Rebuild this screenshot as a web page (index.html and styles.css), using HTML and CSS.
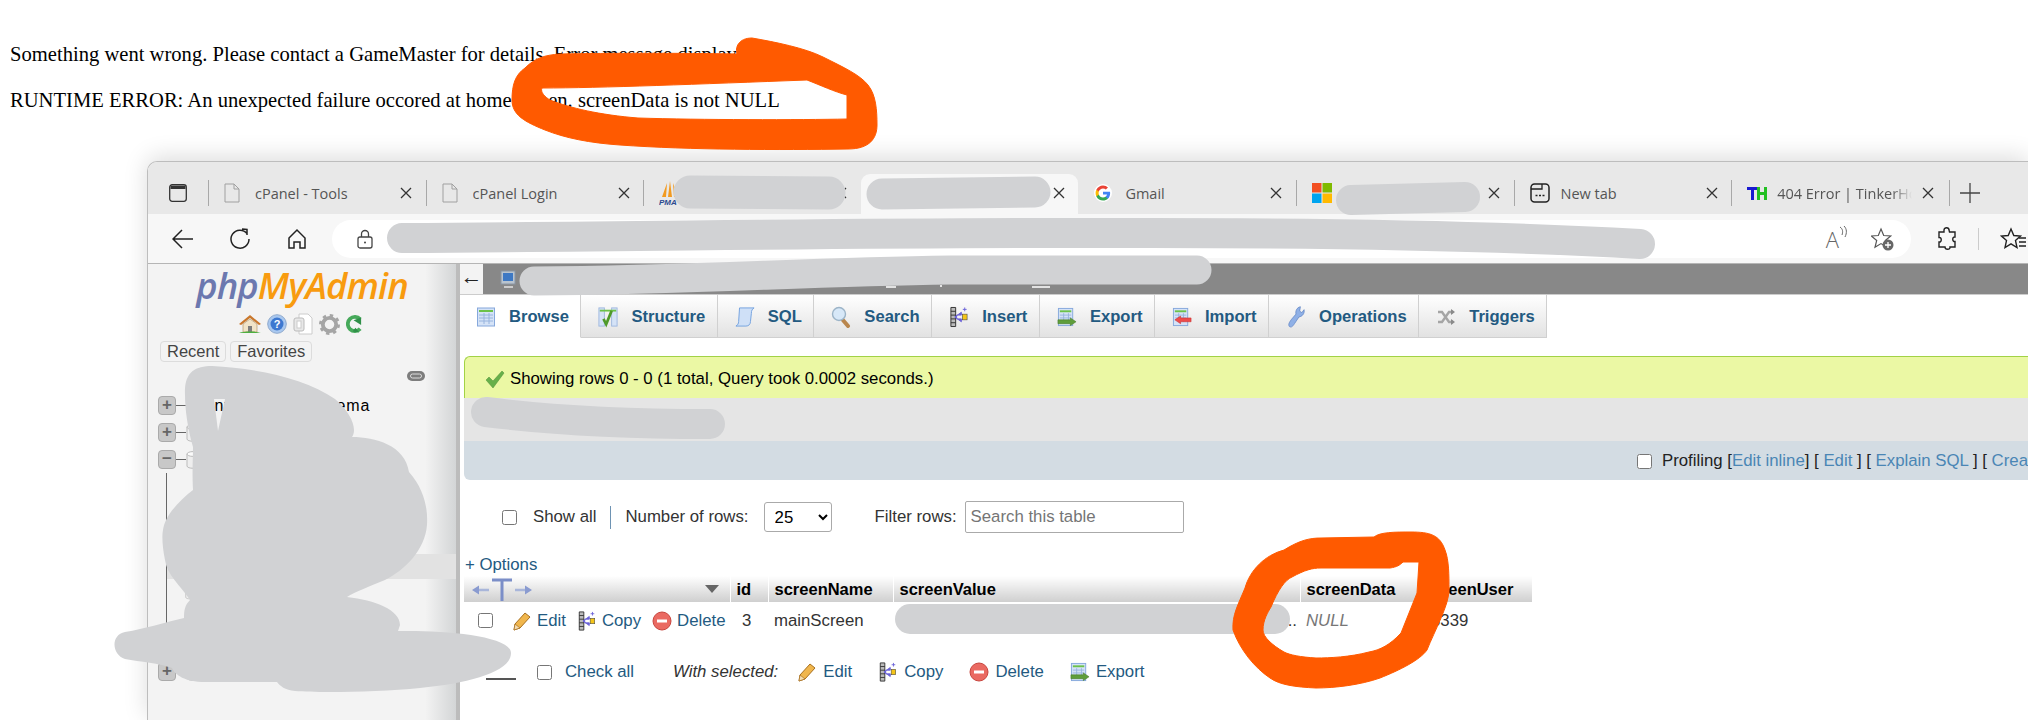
FILE: index.html
```html
<!DOCTYPE html>
<html lang="en">
<head>
<meta charset="utf-8">
<title>Runtime error</title>
<link rel="stylesheet" href="styles.css">
</head>
<body>
<svg class="defs" width="0" height="0" aria-hidden="true">
  <symbol id="i-doc" viewBox="0 0 16 20"><path d="M1 1h9l5 5v13H1z M10 1v5h5" fill="none" stroke="#a0a0a0" stroke-width="1"/></symbol>
  <symbol id="i-x" viewBox="0 0 12 12"><path d="M1 1l10 10M11 1L1 11" stroke="#333" stroke-width="1.3" fill="none"/></symbol>
  <symbol id="i-table" viewBox="0 0 20 20"><rect x="1.5" y="1" width="17" height="18" fill="#d5e3f7" stroke="#86a8dc"/><path d="M3 4h14" stroke="#6cc24a" stroke-width="2"/><path d="M3 8h14M3 11h14M3 14h14M8 6v11M13 6v11" stroke="#98b4de"/></symbol>
  <symbol id="i-struct" viewBox="0 0 22 22"><rect x="1" y="1" width="6" height="20" fill="#d5e3f7" stroke="#9db6de"/><rect x="15" y="1" width="6" height="20" fill="#d5e3f7" stroke="#9db6de"/><path d="M2 4h18" stroke="#6cc24a" stroke-width="2"/><path d="M6 13l3 6 6-15" stroke="#4f9a2a" stroke-width="3" fill="none"/></symbol>
  <symbol id="i-sql" viewBox="0 0 22 22"><path d="M5 1h16c-2 1-3 3-3 6l-1 9c0 3-2 5-5 5H1c2-1 3-3 3-5z" fill="#cfe0f7" stroke="#6d9ede"/></symbol>
  <symbol id="i-search" viewBox="0 0 20 22"><path d="M11 13l6 7" stroke="#b9864d" stroke-width="4" stroke-linecap="round"/><circle cx="8" cy="8" r="6.5" fill="#d7e8f8" stroke="#9cb4c8" stroke-width="1.4"/></symbol>
  <symbol id="i-insert" viewBox="0 0 21 22"><path d="M2 1h5v20H2z" fill="#bbb" stroke="#333"/><path d="M2 5h5M2 9h5M2 13h5M2 17h5" stroke="#333"/><path d="M13 6v3h-5v4h5v3l-7-5z" fill="#6a62d8" stroke="#6a62d8"/><rect x="14" y="8" width="5" height="6" fill="#f5c518" stroke="#444" stroke-width=".6"/><path d="M16.5 1v4M14.5 3h4" stroke="#6a62d8"/></symbol>
  <symbol id="i-export" viewBox="0 0 21 20"><rect x="1.5" y="1" width="15" height="18" fill="#d5e3f7" stroke="#86a8dc"/><path d="M3 4h12" stroke="#6cc24a" stroke-width="2"/><path d="M3 8h12M3 11h12M7 6v9M12 6v9" stroke="#98b4de"/><path d="M1 13h13v-2l6 4-6 4v-2H1z" fill="#5f9e3b" stroke="#4a7d2b" stroke-width=".6"/></symbol>
  <symbol id="i-import" viewBox="0 0 21 20"><rect x="1.5" y="1" width="15" height="18" fill="#d5e3f7" stroke="#86a8dc"/><path d="M3 4h12" stroke="#6cc24a" stroke-width="2"/><path d="M3 8h12M3 11h12M7 6v9M12 6v9" stroke="#98b4de"/><path d="M20 11H9V9l-6 4 6 4v-2h11z" fill="#ee4b4b" stroke="#c83232" stroke-width=".6"/></symbol>
  <symbol id="i-wrench" viewBox="0 0 22 30"><path d="M2 28c-2-3 0-6 3-10l6-7c-1-4 1-9 6-10l-1 6 3 2 3-4c1 5-2 9-7 10l-6 9c-2 3-4 6-7 4z" fill="#8fb0e6" stroke="#5f83c4"/></symbol>
  <symbol id="i-trig" viewBox="0 0 20 20"><path d="M2 5h4l7 10h4M2 15h4l7-10h4" fill="none" stroke="#a5a5a5" stroke-width="2.4"/><path d="M15 2l4 3-4 3zM15 12l4 3-4 3z" fill="#8a8a8a"/></symbol>
  <symbol id="i-pencil" viewBox="0 0 20 20"><path d="M2 19l1-6L13 2l5 4L8 17z" fill="#f0b64d" stroke="#a8701f"/><path d="M2 19l1-6 5 4z" fill="#f4dcb0" stroke="#a8701f" stroke-width=".7"/></symbol>
  <symbol id="i-del" viewBox="0 0 20 20"><circle cx="10" cy="10" r="9" fill="#ea6a62" stroke="#c8453e"/><rect x="5" y="8.500" width="10" height="3" fill="#fff"/></symbol>
  <symbol id="i-check" viewBox="0 0 20 20"><path d="M1 11l3-3 4 4 9-10 2 2-11 15z" fill="#67b04a" stroke="#4d8f36" stroke-width=".5"/></symbol>
  <symbol id="i-db" viewBox="0 0 14 18"><path d="M1 3v12c0 3 12 3 12 0V3z" fill="#eee" stroke="#bbb"/><ellipse cx="7" cy="3" rx="6" ry="2.400" fill="#fafafa" stroke="#bbb"/></symbol>
</svg>

<p class="msg">Something went wrong. Please contact a GameMaster for details. Error message displayed:</p>
<p class="msg">RUNTIME ERROR: An unexpected failure occored at homeScreen. screenData is not NULL</p>

<section class="win">
  <div class="strip">
    <div class="strip-start">
      <svg class="ic-side" viewBox="0 0 18 18" width="18" height="18"><rect x=".7" y=".7" width="16.600" height="16.600" rx="2.500" fill="none" stroke="#333" stroke-width="1.300"/><path d="M1.500 1.500h15V5h-15z" fill="#333"/></svg>
    </div>
    <div class="tab"><i class="sep"></i><svg class="fav fav-doc"><use href="#i-doc"/></svg><span class="lbl">cPanel - Tools</span><svg class="close"><use href="#i-x"/></svg></div>
    <div class="tab"><i class="sep"></i><svg class="fav fav-doc"><use href="#i-doc"/></svg><span class="lbl">cPanel Login</span><svg class="close"><use href="#i-x"/></svg></div>
    <div class="tab"><i class="sep"></i>
      <svg class="fav fav-pma" viewBox="0 0 20 26"><path d="M8 3L3 17h4zM11 1l-2 16h4zM14 3l1 14h4z" fill="#f29a1f"/><text x="0" y="25" font-size="8" font-weight="700" font-style="italic" fill="#2a4a8f" font-family="Liberation Sans">PMA</text></svg>
      <span class="lbl"></span><svg class="close"><use href="#i-x"/></svg></div>
    <div class="tab tab-on"><i class="sep sep-off"></i><i class="fav"></i><span class="lbl"></span><svg class="close"><use href="#i-x"/></svg></div>
    <div class="tab"><i class="sep sep-off"></i>
      <svg class="fav fav-g" viewBox="0 0 48 48"><circle cx="24" cy="24" r="24" fill="#fff"/><path d="M43 24.500c0-1.400-.1-2.700-.4-4H24v7.600h10.700c-.5 2.500-1.900 4.600-4 6v5h6.400C41 35.600 43 30.500 43 24.500z" fill="#4285f4"/><path d="M24 44c5.400 0 9.900-1.800 13.100-4.800l-6.400-5c-1.800 1.200-4 1.900-6.700 1.900-5.200 0-9.600-3.500-11.100-8.200H6.300v5.100C9.600 39.500 16.300 44 24 44z" fill="#34a853"/><path d="M12.900 27.900c-.4-1.200-.6-2.500-.6-3.900s.2-2.700.6-3.900V15H6.300C5 17.700 4.200 20.800 4.200 24s.8 6.300 2.100 9z" fill="#fbbc05"/><path d="M24 11.900c2.900 0 5.600 1 7.600 3l5.700-5.700C33.900 6 29.400 4 24 4 16.300 4 9.600 8.500 6.300 15l6.600 5.100c1.500-4.700 5.900-8.200 11.100-8.200z" fill="#ea4335"/></svg>
      <span class="lbl">Gmail</span><svg class="close"><use href="#i-x"/></svg></div>
    <div class="tab"><i class="sep"></i>
      <svg class="fav fav-ms" viewBox="0 0 20 20"><rect width="9.500" height="9.500" fill="#f25022"/><rect x="10.500" width="9.500" height="9.500" fill="#7fba00"/><rect y="10.500" width="9.500" height="9.500" fill="#00a4ef"/><rect x="10.500" y="10.500" width="9.500" height="9.500" fill="#ffb900"/></svg>
      <span class="lbl"></span><svg class="close"><use href="#i-x"/></svg></div>
    <div class="tab"><i class="sep"></i>
      <svg class="fav fav-new" viewBox="0 0 20 20"><rect x="1" y="1" width="18" height="18" rx="3.500" fill="none" stroke="#222" stroke-width="1.500"/><path d="M1 6h11V1" fill="none" stroke="#222" stroke-width="1.300"/><path d="M5.500 12.500h2M9 12.500h2M12.500 12.500h2" stroke="#222" stroke-width="1.600"/></svg>
      <span class="lbl">New tab</span><svg class="close"><use href="#i-x"/></svg></div>
    <div class="tab"><i class="sep"></i>
      <svg class="fav fav-th" viewBox="0 0 21 13"><path d="M0 0h11v3H7v10H4V3H0z" fill="#1a1ad0"/><path d="M10 0h3v5h4V0h3v13h-3V8h-4v5h-3z" fill="#22c022"/></svg>
      <span class="lbl lbl-fade">404 Error | TinkerHouse</span><svg class="close"><use href="#i-x"/></svg></div>
    <i class="sep sep-last"></i>
    <svg class="plus" viewBox="0 0 22 22" width="22" height="22"><path d="M11 1v20M1 11h20" stroke="#444" stroke-width="1.300"/></svg>
  </div>

  <div class="toolbar">
    <svg class="tool" viewBox="0 0 22 22" width="22" height="22"><path d="M21 11H2M10 2l-9 9 9 9" fill="none" stroke="#222" stroke-width="1.500"/></svg>
    <svg class="tool" viewBox="0 0 22 22" width="22" height="22"><path d="M18 5.500A9 9 0 1 0 20 11M13 1l5 .500v5.500" fill="none" stroke="#222" stroke-width="1.500"/></svg>
    <svg class="tool tool-s" viewBox="0 0 20 22" width="20" height="22"><path d="M2 10l8-8 8 8v10h-5v-6H7v6H2z" fill="none" stroke="#222" stroke-width="1.500"/></svg>
    <div class="pill">
      <svg viewBox="0 0 16 20" width="16" height="20"><path d="M4.500 8V5a3.500 3.500 0 0 1 7 0v3" fill="none" stroke="#444" stroke-width="1.300"/><rect x="1" y="8" width="14" height="11" rx="2" fill="none" stroke="#444" stroke-width="1.300"/><circle cx="8" cy="13.500" r="1" fill="#444"/></svg>
      <span class="pill-gap"></span>
      <span class="read">A<svg viewBox="0 0 8 12" width="8" height="12"><path d="M1 1c3 2 3 5 2 8M5 0c3 3 3 7 1 11" fill="none" stroke="#666"/></svg></span>
      <svg viewBox="0 0 24 24" width="24" height="24"><path d="M10 2l2.700 6.500 7 .5-5.400 4.500 1.700 6.800-6-3.700-6 3.700 1.700-6.800L.3 9l7-.5z" fill="none" stroke="#555" stroke-width="1.200"/><circle cx="17" cy="18" r="5.500" fill="#666"/><path d="M17 15v6M14 18h6" stroke="#fff" stroke-width="1.300"/></svg>
    </div>
    <svg class="puzzle" viewBox="0 0 20 24" width="20" height="24"><path d="M7 3c0-3 5-3 5 0l.5 2H18v5c-3-.5-3 5 0 4.500V20h-5c.5 3-5 3-5 0H2v-5c3 .5 3-5 0-4.500V5h5z" fill="none" stroke="#222" stroke-width="1.400"/></svg>
    <i class="tool-sep"></i>
    <svg class="favs" viewBox="0 0 26 24" width="26" height="24"><path d="M11 2l2.800 6.500 6.700.6-5 4.500 1.500 6.900-6-3.600-6 3.600 1.500-6.900-5-4.500 6.700-.6z" fill="none" stroke="#222" stroke-width="1.400"/><path d="M19 11h7M19 15h7M19 19h7" stroke="#222" stroke-width="1.400"/></svg>
  </div>

  <div class="pma">
    <aside class="side">
      <div class="logo"><span class="logo-a">php</span><span class="logo-b">MyAdmin</span></div>
      <div class="side-icons">
        <svg viewBox="0 0 22 20" width="22" height="20"><path d="M11 1L0 10l2 1 9-7 9 7 2-1z" fill="#c9772c"/><path d="M4 10l7-5 7 5v8H4z" fill="#f1e4c8" stroke="#a88a5a" stroke-width=".6"/><rect x="9" y="12" width="4" height="6" fill="#7d7d7d"/><path d="M0 19c5-2 17-2 22 0z" fill="#4caf3f"/></svg>
        <svg viewBox="0 0 20 20" width="20" height="20"><circle cx="10" cy="10" r="9.300" fill="#a9c8ef" stroke="#8fa9cc"/><circle cx="10" cy="10" r="6.500" fill="#3d78d0"/><text x="10" y="14" font-size="11" font-weight="700" text-anchor="middle" fill="#fff" font-family="Liberation Sans">?</text></svg>
        <svg viewBox="0 0 20 22" width="20" height="22"><path d="M6 1h9l4 4v16H6z" fill="#fff" stroke="#ccc"/><rect x="1" y="5" width="10" height="13" rx="2" fill="#e8e8e8" stroke="#bbb"/><rect x="4" y="8" width="4" height="7" fill="#fff" stroke="#ccc"/></svg>
        <svg viewBox="0 0 22 22" width="21" height="21"><circle cx="11" cy="11" r="7" fill="none" stroke="#a5a5a5" stroke-width="4"/><circle cx="11" cy="11" r="9.500" fill="none" stroke="#a5a5a5" stroke-width="3" stroke-dasharray="3.500 3.960"/></svg>
        <svg viewBox="0 0 18 20" width="17" height="20"><path d="M15 5a7.500 7.500 0 1 0 0 10" fill="none" stroke="#46a95a" stroke-width="4"/><path d="M8 6l8-3v8zM10 14l4 5-7-1z" fill="#2f8f48"/></svg>
      </div>
      <div class="side-btns"><span class="side-btn">Recent</span><span class="side-btn">Favorites</span></div>
      <svg class="chain" viewBox="0 0 18 10" width="18" height="10"><rect width="18" height="10" rx="5" fill="#7d7d7d"/><rect x="3.500" y="3" width="11" height="4" rx="2" fill="none" stroke="#ddd"/></svg>
      <div class="tree">
        <div class="node"><span class="exp">+</span><i class="conn"></i><svg class="db"><use href="#i-db"/></svg><span class="nlabel">information_schema</span></div>
        <div class="node"><span class="exp">+</span><i class="conn"></i><svg class="db"><use href="#i-db"/></svg></div>
        <div class="node"><span class="exp">−</span><i class="conn"></i><svg class="db"><use href="#i-db"/></svg></div>
        <div class="kids"><div class="kid-band"></div><svg class="kid-ic"><use href="#i-db"/></svg></div>
        <div class="node"><span class="exp">+</span><i class="conn"></i><svg class="db"><use href="#i-db"/></svg></div>
      </div>
    </aside>

    <main class="main">
      <div class="crumbs"><span class="crumb-back">←</span>
        <svg viewBox="0 0 18 20" width="18" height="20"><rect x="1" y="2" width="14" height="13" fill="#b9c4cf" stroke="#8a96a3"/><rect x="3" y="4" width="10" height="8" fill="#3e79c4"/><path d="M4 18h9" stroke="#ccc" stroke-width="2"/></svg>
      </div>
      <nav class="ptabs">
        <a class="ptab ptab-on"><svg class="pic"><use href="#i-table"/></svg>Browse</a>
        <a class="ptab"><svg class="pic"><use href="#i-struct"/></svg>Structure</a>
        <a class="ptab"><svg class="pic"><use href="#i-sql"/></svg>SQL</a>
        <a class="ptab"><svg class="pic"><use href="#i-search"/></svg>Search</a>
        <a class="ptab"><svg class="pic"><use href="#i-insert"/></svg>Insert</a>
        <a class="ptab"><svg class="pic"><use href="#i-export"/></svg>Export</a>
        <a class="ptab"><svg class="pic"><use href="#i-import"/></svg>Import</a>
        <a class="ptab"><svg class="pic"><use href="#i-wrench"/></svg>Operations</a>
        <a class="ptab"><svg class="pic"><use href="#i-trig"/></svg>Triggers</a>
      </nav>

      <div class="result">
        <div class="ok"><svg class="ok-ic"><use href="#i-check"/></svg>Showing rows 0 - 0 (1 total, Query took 0.0002 seconds.)</div>
        <div class="sqlbox"></div>
        <div class="sqlacts"><input type="checkbox" class="cb"><span class="prof">Profiling [<a class="lnk">Edit inline</a>] [ <a class="lnk">Edit</a> ] [ <a class="lnk">Explain SQL</a> ] [ <a class="lnk">Create PHP code</a> ]</span></div>
      </div>

      <div class="filters">
        <input type="checkbox" class="cb"><span class="f-show">Show all</span><i class="f-sep"></i><span class="f-num">Number of rows:</span>
        <select class="f-sel"><option>25</option></select>
        <span class="f-filter">Filter rows:</span><input class="f-in" type="text" placeholder="Search this table">
      </div>
      <a class="options">+ Options</a>

      <table class="rows">
        <thead>
          <tr>
            <th class="c-act"><span class="th-act"><svg class="tarrow" viewBox="0 0 62 24" width="62" height="24"><path d="M31 2v21M21 2h20" stroke="#7b8ec8" stroke-width="3"/><path d="M4 12h14M44 12h14" stroke="#a9b6da" stroke-width="2.500"/><path d="M1 12l7-4.500v9zM61 12l-7-4.500v9z" fill="#8a9bd0"/></svg><svg class="tdown" viewBox="0 0 14 10" width="14" height="10"><path d="M0 1h14L7 9z" fill="#666"/></svg></span></th>
            <th class="c-id">id</th><th class="c-name">screenName</th><th class="c-val">screenValue</th><th class="c-data">screenData</th><th class="c-user">screenUser</th>
          </tr>
        </thead>
        <tbody>
          <tr>
            <td class="acts"><span class="acts-in"><input type="checkbox" class="cb cb-row"><a class="act"><svg class="a-ic"><use href="#i-pencil"/></svg>Edit</a><a class="act"><svg class="a-ic"><use href="#i-insert"/></svg>Copy</a><a class="act"><svg class="a-ic"><use href="#i-del"/></svg>Delete</a></span></td>
            <td class="num">3</td><td>mainScreen</td><td class="ell">...</td><td class="null">NULL</td><td class="usr">3339</td>
          </tr>
        </tbody>
      </table>

      <div class="bulk">
        <i class="bulk-arrow"></i><input type="checkbox" class="cb"><a class="bulk-all">Check all</a><em class="bulk-with">With selected:</em>
        <a class="act-b"><svg class="a-ic"><use href="#i-pencil"/></svg>Edit</a>
        <a class="act-b"><svg class="a-ic"><use href="#i-insert"/></svg>Copy</a>
        <a class="act-b"><svg class="a-ic"><use href="#i-del"/></svg>Delete</a>
        <a class="act-b"><svg class="a-ic"><use href="#i-export"/></svg>Export</a>
      </div>
    </main>
  </div>
</section>

<svg class="marks" viewBox="0 0 2028 720" width="2028" height="720" aria-hidden="true">
  <g class="redact">
    <path d="M690 192L829 193" stroke-width="33"/>
    <path d="M882 194L1035 192" stroke-width="31"/>
    <path d="M1351 200L1465 197" stroke-width="30"/>
    <path d="M402 238C700 236 900 232 1150 233C1350 233 1500 236 1640 244" stroke-width="30"/>
    <path d="M534 281C700 280 800 272 950 270L1197 270" stroke-width="29"/>
    <path d="M486 412C550 420 620 424 710 424" stroke-width="30"/>
    <path d="M910 619L1275 619" stroke-width="30"/>
  </g>
  <path class="blob" fill-rule="evenodd" d="M185 395C184 372 195 366 212 366C255 368 305 378 335 399C350 412 358 428 352 437C375 437 405 445 409 472C425 490 428 510 427 525C425 550 405 570 385 580C370 586 355 592 347 597C375 600 400 610 400 625L398 631C440 630 511 635 511 653C511 672 470 683 420 688C380 692 320 693 295 691C285 690 280 686 277 682L205 682C185 682 175 675 172 668C160 663 140 662 125 659C112 655 110 635 125 632C145 629 165 622 184 618C184 610 185 605 190 600C180 585 167 575 165 560C162 545 162 535 163 530C165 515 180 500 193 490C192 470 193 460 193 447C188 430 185 410 185 395ZM214 399L225 399L218 431Z"/>
  <path class="bits" d="M886 287h10M1032 287h18M940 286h2"/>
  <path class="scrawl" fill-rule="evenodd" d="M752 38C775 42 805 48 823 57C845 68 860 75 868 85C876 95 877 110 877 125C877 138 870 149 848 149C780 150 690 150 620 145C590 143 565 138 545 130C525 122 512 115 512 100C512 85 515 75 525 68C535 58 545 55 560 54C610 53 680 53 737 54C735 48 738 38 752 38ZM542 88C600 88 700 84 807 80C820 85 835 92 847 95L847 119C800 120 700 120 638 118C600 115 570 108 550 100C545 97 540 92 542 88Z"/>
  <path class="scrawl" fill-rule="evenodd" d="M1374 537C1380 532 1395 532 1411 532C1430 532 1440 535 1445 550C1449 560 1449 575 1449 590C1449 605 1435 630 1427 650C1420 660 1400 670 1380 678C1360 685 1335 688 1316 688C1295 687 1280 685 1270 678C1255 668 1240 650 1233 630C1232 615 1238 605 1245 588C1250 570 1265 555 1284 550C1300 540 1310 538 1321 538ZM1321 568L1390 568C1397 567 1400 565 1403 562L1419 562L1417 593L1401 633C1390 645 1380 650 1369 652C1350 657 1330 658 1316 658C1300 657 1290 655 1284 652C1272 645 1263 637 1263 630C1263 620 1268 612 1271 607C1278 590 1285 580 1292 577C1305 570 1312 568 1321 568Z"/>
</svg>
</body>
</html>
```
FILE: styles.css
```css
* { box-sizing: border-box; }
html, body { height: 720px; overflow: hidden; }
body { margin: 0; padding-top: 42px; position: relative; background: #fff; color: #000; font-family: "Liberation Sans", Arial, sans-serif; font-size: 16.8px; }
.defs { position: absolute; }
a { color: #235a81; }

.msg { margin: 0 0 22px 10px; font-family: "Liberation Serif", "Times New Roman", serif; font-size: 20.6px; line-height: 24px; white-space: nowrap; }
.msg + .msg { margin-bottom: 0; }

.win { margin: 49px 0 0 147px; height: 559px; border: solid #bdbdbd; border-width: 1px 0 0 1px; border-top-left-radius: 10px; overflow: hidden; box-shadow: 0 -4px 24px rgba(0, 0, 0, .14); background: #f7f7f7; }

.strip { display: flex; align-items: flex-end; height: 52px; background: #e8e8e8; }
.strip-start { width: 60px; height: 40px; padding: 0 0 2px 21px; display: flex; align-items: center; }
.tab { width: 217.6px; flex: none; height: 40px; padding-bottom: 2px; display: flex; align-items: center; font-family: "Open Sans", sans-serif; font-size: 14.5px; color: #555; }
.tab-on { background: #f7f7f7; border-radius: 9px 9px 0 0; }
.sep { display: block; width: 1px; height: 26px; background: #a8a8a8; flex: none; }
.sep-off { background: transparent; }
.sep-last { margin-bottom: 8px; }
.fav { width: 18px; height: 26px; margin-left: 15px; flex: none; }
.fav-doc { width: 16px; height: 20px; margin-right: 2px; }
.fav-g { height: 20px; }
.fav-pma { width: 20px; margin-right: -2px; }
.fav-ms { width: 20px; height: 20px; margin-right: -2px; }
.fav-new { width: 20px; height: 20px; margin-right: -2px; }
.fav-th { width: 21px; height: 13px; margin-right: -3px; }
.lbl { margin-left: 13px; width: 135px; flex: none; white-space: nowrap; overflow: hidden; }
.lbl-fade { -webkit-mask-image: linear-gradient(to right, #000 85%, transparent); mask-image: linear-gradient(to right, #000 85%, transparent); margin-left: 12px; }
.close { width: 12px; height: 12px; margin-left: 10px; flex: none; }
.plus { margin: 0 0 10px 9px; }

.toolbar { display: flex; align-items: center; gap: 35px; height: 50px; padding-left: 24px; border-bottom: 1px solid #b5b5b5; background: #f7f7f7; }
.tool { flex: none; }
.tool-s { margin-left: 1px; }
.pill { display: flex; align-items: center; flex: none; width: 1579px; height: 38px; margin-left: -10px; padding: 0 16px 0 25px; background: #fff; border-radius: 19px; }
.pill-gap { flex: 1; }
.read { display: flex; align-items: flex-start; margin-right: 24px; font-family: "Open Sans", sans-serif; font-size: 22px; font-weight: 300; line-height: 26px; color: #666; }
.puzzle { flex: none; margin-left: -9px; }
.tool-sep { flex: none; width: 1px; height: 22px; background: #ccc; margin-left: -14px; }
.favs { flex: none; margin-left: -14px; }

.pma { display: flex; height: 507px; background: #fff; }
.side { width: 312px; flex: none; border-right: 4px solid #bcbcbc; background: linear-gradient(to right, #f3f3f3 90%, #d3d5d6); }
.logo { height: 38px; padding-top: 2px; text-align: center; font-family: "Open Sans", sans-serif; font-weight: 600; font-style: italic; font-size: 36.5px; line-height: 38px; letter-spacing: -.9px; }
.logo-a { color: #6c78af; }
.logo-b { color: #f89b0f; }
.side-icons { display: flex; justify-content: center; align-items: center; gap: 6px; height: 24px; margin-top: 10px; padding-right: 2px; }
.side-btns { display: flex; gap: 4px; margin: 5px 0 0 12px; }
.side-btn { height: 21px; padding: 0 6px; border: 1px solid #dcdcdc; border-radius: 4px; line-height: 19px; font-size: 16.5px; color: #444; }
.chain { display: block; margin: 9px 0 0 259px; }
.tree { margin-top: 11px; padding-left: 10px; font-size: 16px; }
.node { display: flex; align-items: center; height: 27px; }
.exp { width: 18px; height: 19px; flex: none; border: 1px solid #aaa; border-radius: 4px; background: #c8c8c8; color: #666; font-weight: 700; font-size: 17px; line-height: 16px; text-align: center; }
.conn { width: 10px; height: 1px; flex: none; background: #666; }
.db { width: 14px; height: 18px; flex: none; }
.nlabel { margin-left: 10px; letter-spacing: .9px; white-space: nowrap; }
.kids { height: 185px; margin-left: 8px; padding-top: 81px; border-left: 1px solid #666; }
.kid-band { height: 25px; background: #e2e2e2; }
.kid-ic { display: block; width: 10px; height: 18px; margin: 5px 0 0 18px; }

.main { flex: 1; min-width: 0; }
.crumbs { display: flex; align-items: center; height: 31px; background: #888; border-bottom: 1px solid #ccc; }
.crumb-back { width: 23px; height: 30px; margin-right: 17px; background: #f3f3f3; text-align: center; line-height: 26px; font-size: 22px; color: #222; }
.ptabs { display: flex; height: 43px; }
.ptab { display: flex; align-items: center; height: 43px; padding: 1px 11.5px 0 17px; border: solid #d0d0d0; border-width: 0 1px 1px 0; background: linear-gradient(#fff, #e2e2e2); font-weight: 700; font-size: 16.6px; white-space: nowrap; }
.ptab-on { background: #fff; border-bottom-color: #fff; padding-left: 16px; }
.pic { width: 20px; height: 22px; margin-right: 13px; flex: none; }

.result { margin: 18px 0 0 4px; white-space: nowrap; }
.ok { display: flex; align-items: center; height: 42px; padding: 2px 0 0 20px; background: #ebf8a4; border-top: 1px solid #a2d246; border-left: 1px solid #a2d246; border-top-left-radius: 6px; }
.ok-ic { width: 20px; height: 20px; margin-right: 5px; }
.sqlbox { height: 43px; background: #e5e5e5; }
.sqlacts { display: flex; align-items: center; height: 39px; padding: 1px 0 0 1173px; background: #d3dce3; border-bottom-left-radius: 6px; overflow: hidden; }
.cb { width: 15px; height: 15px; margin: 0; flex: none; }
.prof { margin-left: 10px; color: #222; white-space: pre; }
.lnk { color: #4a86b5; }

.filters { display: flex; align-items: center; height: 32px; margin-top: 21px; padding-left: 42px; white-space: nowrap; color: #333; }
.f-show { margin-left: 16px; }
.f-sep { width: 1px; height: 23px; margin: 0 14px 0 14px; background: #6e93b3; }
.f-sel { width: 68px; height: 30px; margin-left: 15px; padding-left: 6px; border: 1px solid #aaa; border-radius: 3px; background: #fff; font: inherit; color: #000; }
.f-filter { margin-left: 43px; }
.f-in { width: 219px; height: 32px; margin-left: 8px; padding: 0 5px; border: 1px solid #aaa; border-radius: 2px; font: inherit; }
.options { display: block; height: 19px; margin: 22px 0 2px 5px; line-height: 19px; }

.rows { margin-left: 4px; border-collapse: collapse; table-layout: fixed; width: 1068px; }
.rows th { height: 26px; padding: 0 6px; text-align: left; white-space: nowrap; background: linear-gradient(#fff, #cfcfcf); border-right: 1px solid #fff; font-size: 16.5px; }
.c-act { width: 266px; }
.c-id { width: 38px; }
.c-name { width: 125px; }
.c-val { width: 407px; }
.c-data { width: 117px; }
.c-user { width: 115px; }
.rows th.c-act { padding: 0 4px 0 7px; }
.th-act { display: flex; justify-content: space-between; align-items: center; height: 26px; }
.tarrow { margin-top: 1px; }
.tdown { margin-right: 7px; }
.rows td { height: 37px; padding: 0 6px; white-space: nowrap; color: #333; }
.rows td.acts { padding: 0; }
.acts-in { display: flex; align-items: center; padding-left: 14px; }
.cb-row { margin-right: 19px; }
.act { display: flex; align-items: center; gap: 5px; margin-right: 11px; }
.a-ic { width: 20px; height: 20px; flex: none; }
.rows td.num { padding-left: 12px; }
.rows td.ell { text-align: right; padding-right: 3px; }
.rows td.null { font-style: italic; color: #777; padding-left: 6px; }
.rows td.usr { padding-left: 14px; }

.bulk { display: flex; align-items: center; height: 30px; margin-top: 18px; padding-left: 26px; white-space: nowrap; }
.bulk-arrow { width: 30px; height: 2px; margin: 14px 21px 0 0; background: #555; }
.bulk-all { margin-left: 13px; }
.bulk-with { margin: 0 19px 0 39px; color: #333; }
.act-b { display: flex; align-items: center; gap: 6px; margin-right: 26px; }

.marks { position: absolute; left: 0; top: 0; pointer-events: none; }
.redact path { fill: none; stroke: #d1d2d4; stroke-linecap: round; stroke-linejoin: round; }
.blob { fill: #d1d2d4; }
.bits { fill: none; stroke: #fff; stroke-width: 1.500; }
.scrawl { fill: #ff5a00; stroke: #ff5a00; stroke-width: 1; stroke-linejoin: round; }
```
